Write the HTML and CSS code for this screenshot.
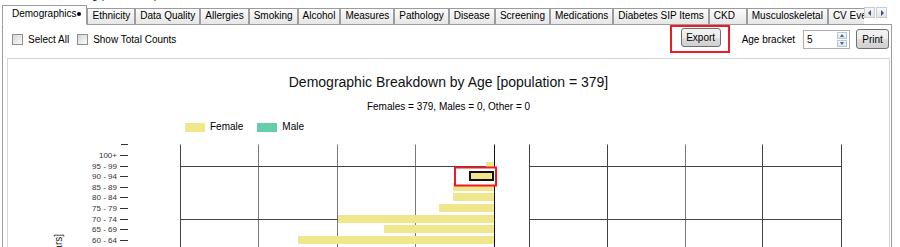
FILE: index.html
```html
<!DOCTYPE html>
<html lang="en">
  <head>
    <meta charset="UTF-8" />
    <meta name="viewport" content="width=device-width, initial-scale=1.0" />
    <title>Demographics</title>
    <link rel="stylesheet" href="styles.css">
  </head>
  <body>
    <div class="caption"><span>Practice Listing (All Patients)</span></div>

    <div class="tab-strip">
      <div class="tab-list">
        <div class="tab active">Demographics<span class="dot"></span></div>
        <div class="tab">Ethnicity</div>
        <div class="tab">Data Quality</div>
        <div class="tab">Allergies</div>
        <div class="tab">Smoking</div>
        <div class="tab">Alcohol</div>
        <div class="tab">Measures</div>
        <div class="tab">Pathology</div>
        <div class="tab">Disease</div>
        <div class="tab">Screening</div>
        <div class="tab">Medications</div>
        <div class="tab">Diabetes SIP Items</div>
        <div class="tab ckd">CKD</div>
        <div class="tab">Musculoskeletal</div>
        <div class="tab">CV Events</div>
      </div>
      <div class="tab-scroll">
        <span class="scroll-btn prev"></span>
        <span class="scroll-btn next"></span>
      </div>
    </div>

    <div class="tab-panel">
      <div class="toolbar">
        <label class="check"><input type="checkbox" /> Select All</label>
        <label class="check"><input type="checkbox" /> Show Total Counts</label>
        <div class="toolbar-right">
          <div class="highlight"><button class="btn export">Export</button></div>
          <span class="age-label">Age bracket</span>
          <div class="spinner">
            <input type="text" value="5" />
            <div class="spin"><span class="up"></span><span class="down"></span></div>
          </div>
          <button class="btn print">Print</button>
        </div>
      </div>

      <div class="chart-panel">
        <h1 class="chart-title">Demographic Breakdown by Age [population = 379]</h1>
        <p class="chart-sub">Females = 379, Males = 0, Other = 0</p>
        <div class="legend">
          <span class="legend-item"><span class="swatch female"></span>Female</span>
          <span class="legend-item"><span class="swatch male"></span>Male</span>
        </div>

        <svg class="pyramid" width="881" height="110" viewBox="0 0 881 110">
          <text class="axis-title" transform="translate(54 94) rotate(-90)" text-anchor="end">Age Bracket [Years]</text>

          <g class="ticks">
            <line x1="113" y1="4.5" x2="120" y2="4.5" />
            <line x1="112" y1="15.5" x2="120" y2="15.5" />
            <line x1="112" y1="26.5" x2="120" y2="26.5" />
            <line x1="112" y1="36.5" x2="120" y2="36.5" />
            <line x1="112" y1="47.5" x2="120" y2="47.5" />
            <line x1="112" y1="57.5" x2="120" y2="57.5" />
            <line x1="112" y1="68.5" x2="120" y2="68.5" />
            <line x1="112" y1="79.5" x2="120" y2="79.5" />
            <line x1="112" y1="89.5" x2="120" y2="89.5" />
            <line x1="112" y1="100.5" x2="120" y2="100.5" />
          </g>
          <g class="age-labels" text-anchor="end">
            <text x="109" y="18">100+</text>
            <text x="109" y="29">95 - 99</text>
            <text x="109" y="39">90 - 94</text>
            <text x="109" y="50">85 - 89</text>
            <text x="109" y="60">80 - 84</text>
            <text x="109" y="71">75 - 79</text>
            <text x="109" y="82">70 - 74</text>
            <text x="109" y="92">65 - 69</text>
            <text x="109" y="103">60 - 64</text>
          </g>

          <!-- female side -->
          <g class="grid">
            <line x1="172.5" y1="4.5" x2="172.5" y2="110" />
            <line class="lt" x1="250.5" y1="4.5" x2="250.5" y2="110" />
            <line class="lt" x1="329.5" y1="4.5" x2="329.5" y2="110" />
            <line class="lt" x1="407.5" y1="4.5" x2="407.5" y2="110" />
            <line class="axis" x1="486.5" y1="4.5" x2="486.5" y2="110" />
            <line x1="172" y1="26.5" x2="487" y2="26.5" />
            <line x1="172" y1="79.5" x2="487" y2="79.5" />
          </g>
          <!-- male side -->
          <g class="grid">
            <line x1="521.5" y1="4.5" x2="521.5" y2="110" />
            <line x1="599.5" y1="4.5" x2="599.5" y2="110" />
            <line class="lt" x1="677.5" y1="4.5" x2="677.5" y2="110" />
            <line x1="754.5" y1="4.5" x2="754.5" y2="110" />
            <line x1="833.5" y1="4.5" x2="833.5" y2="110" />
            <line x1="521" y1="26.5" x2="834" y2="26.5" />
            <line x1="521" y1="79.5" x2="834" y2="79.5" />
          </g>

          <g class="bars">
            <rect x="478" y="22" width="8" height="8" />
            <rect x="445" y="43" width="41" height="8" />
            <rect x="445" y="53" width="41" height="8" />
            <rect x="431" y="64" width="55" height="8" />
            <rect x="330" y="75" width="156" height="8" />
            <rect x="376" y="85" width="110" height="8" />
            <rect x="290" y="96" width="196" height="8" />
          </g>

          <rect class="mark" x="447" y="27.5" width="41" height="18" />
          <rect class="bar-selected" x="462" y="32" width="23" height="8" />
        </svg>
      </div>
    </div>
  </body>
</html>
```

FILE: styles.css
```css
body {
  margin: 0;
  width: 900px;
  height: 247px;
  overflow: hidden;
  background: #fff;
  font-family: "Liberation Sans", Arial, sans-serif;
  font-size: 10px;
  color: #000;
}

/* window caption, mostly scrolled out of view */
.caption {
  height: 4px;
  overflow: hidden;
  padding-left: 30px;
}
.caption span {
  display: block;
  line-height: 10px;
  margin-top: -9px;
}

/* tabs */
.tab-strip {
  display: flex;
  margin-left: 2px;
  width: 890px;
  height: 21px;
}
.tab-list {
  display: flex;
  align-items: flex-end;
  flex: 1;
  overflow: hidden;
}
.tab {
  flex: none;
  box-sizing: border-box;
  height: 17px;
  padding: 0 4px 1px;
  line-height: 14px;
  white-space: nowrap;
  border: 1px solid #9a9c9e;
  background: linear-gradient(#fbfbfb, #e6e6e6);
}
.tab.ckd {
  min-width: 38px;
}
.tab.active {
  height: 20px;
  padding: 1px 5px 3px 9px;
  background: #fff;
  border-bottom-color: #fff;
}
.dot {
  display: inline-block;
  width: 4px;
  height: 4px;
  margin-left: 1px;
  border-radius: 50%;
  background: #000;
  vertical-align: 1px;
}
.tab-scroll {
  flex: none;
  display: flex;
  align-items: flex-start;
  gap: 1px;
  box-sizing: border-box;
  width: 28px;
  padding-top: 3px;
  border-bottom: 1px solid #9a9c9e;
}
.scroll-btn {
  position: relative;
  box-sizing: border-box;
  width: 11px;
  height: 11px;
  border: 1px solid #c9cbcf;
  background: linear-gradient(#f7f7f7, #e4e4e4);
}
.scroll-btn::after {
  content: "";
  position: absolute;
  top: 2px;
  border-top: 3px solid transparent;
  border-bottom: 3px solid transparent;
}
.scroll-btn.prev::after {
  left: 3px;
  border-right: 3px solid #3d5177;
}
.scroll-btn.next::after {
  left: 4px;
  border-left: 3px solid #3d5177;
}

/* tab page */
.tab-panel {
  box-sizing: border-box;
  margin-left: 2px;
  width: 890px;
  height: 300px;
  border: 1px solid #9a9c9e;
  border-top: none;
}
.toolbar {
  display: flex;
  align-items: center;
  height: 28px;
  padding: 0 2px 0 9px;
}
.check {
  display: flex;
  align-items: center;
  gap: 5px;
  margin-right: 8px;
}
.check input {
  appearance: none;
  box-sizing: border-box;
  width: 11px;
  height: 11px;
  margin: 0;
  border: 1px solid #8e8f8f;
  background: linear-gradient(135deg, #d6d6d6, #fafafa);
}
.toolbar-right {
  display: flex;
  align-items: center;
  margin-left: auto;
}
.highlight {
  padding: 1px 7px 4px 9px;
  border: 2px solid #ec1c24;
}
.btn {
  box-sizing: border-box;
  padding: 0;
  font: inherit;
  color: #000;
  border: 1px solid #707070;
  border-radius: 3px;
  background: linear-gradient(#f2f2f2 0%, #ebebeb 50%, #dddddd 51%, #cfcfcf 100%);
}
.btn.export {
  display: block;
  width: 40px;
  height: 19px;
}
.btn.print {
  width: 33px;
  height: 20px;
}
.age-label {
  margin: 0 8px 0 12px;
}
.spinner {
  display: flex;
  box-sizing: border-box;
  width: 47px;
  height: 19px;
  margin-right: 6px;
  border: 1px solid #abadb3;
  background: #fff;
}
.spinner input {
  width: 28px;
  padding: 0 0 0 3px;
  border: none;
  font: inherit;
  outline: none;
}
.spin {
  display: flex;
  flex-direction: column;
  gap: 1px;
  margin: 1px 2px 0 auto;
}
.spin span {
  position: relative;
  box-sizing: border-box;
  width: 10px;
  height: 7px;
  border: 1px solid #b8c6d8;
  background: linear-gradient(#f3f7fb, #dbe5f0);
}
.spin span::after {
  content: "";
  position: absolute;
  left: 2px;
  border-left: 2px solid transparent;
  border-right: 2px solid transparent;
}
.spin .up::after {
  top: 1px;
  border-bottom: 3px solid #4a6086;
}
.spin .down::after {
  top: 1px;
  border-top: 3px solid #4a6086;
}

/* chart */
.chart-panel {
  height: 220px;
  margin: 5px 1px 0 4px;
  border: 1px solid #d5d5d5;
}
.chart-title {
  margin: 15px 0 0;
  font-size: 14px;
  font-weight: normal;
  line-height: 16px;
  text-align: center;
  color: #111;
}
.chart-sub {
  margin: 11px 0 0;
  line-height: 12px;
  text-align: center;
}
.legend {
  display: flex;
  align-items: center;
  margin-top: 8px;
  padding-left: 177px;
  line-height: 12px;
}
.legend-item {
  display: flex;
  align-items: center;
  gap: 5px;
  margin-right: 14px;
}
.swatch {
  width: 20px;
  height: 9px;
}
.swatch.female {
  background: #f0e68c;
}
.swatch.male {
  background: #66cdaa;
}
.pyramid {
  display: block;
  margin-top: 7px;
}
.pyramid text {
  font-family: "Liberation Sans", Arial, sans-serif;
}
.axis-title {
  font-size: 10px;
  fill: #222;
}
.age-labels {
  font-size: 8px;
  fill: #333;
}
.ticks line {
  stroke: #333;
  stroke-width: 1;
}
.grid line {
  stroke: #444;
  stroke-width: 1;
}
.grid line.lt {
  stroke: #7a7a7a;
}
.grid line.axis {
  stroke: #111;
}
.bars rect {
  fill: #f0e68c;
}
.mark {
  fill: #fff;
  stroke: #ec1c24;
  stroke-width: 2;
}
.bar-selected {
  fill: #f0e68c;
  stroke: #111;
  stroke-width: 2;
}
```
